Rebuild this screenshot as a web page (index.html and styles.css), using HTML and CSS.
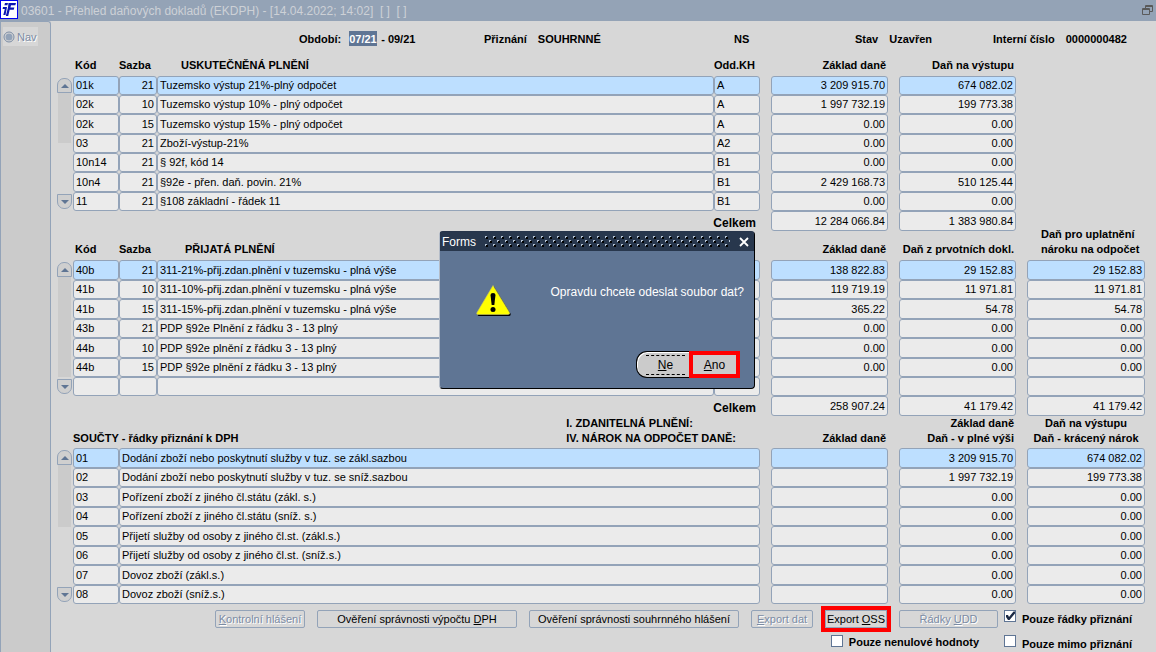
FILE: index.html
```html
<!DOCTYPE html>
<html lang="cs">
<head>
  <meta charset="UTF-8">
  <title>Přehled daňových dokladů</title>
  <link rel="stylesheet" href="styles.css">
</head>
<body>

<header class="titlebar">
  <svg class="logo" width="18" height="19" viewBox="0 0 18 19">
    <rect x="0.5" y="0.5" width="17" height="18" fill="#fff" stroke="#0000f0"/>
    <path d="M3 7h4L5.500 15H3.300L4.800 9H2.600zM5 3h3l-.6 2.300h-3z" fill="#0a14b4"/>
    <path d="M8.500 3h7.500l-.7 2.200h-4.300l-.6 2.200h4l-.7 2.300h-4L8.200 16H5.800L8 7.500z" fill="#0a14b4"/>
  </svg>
  <h1>03601 - Přehled daňových dokladů (EKDPH) - [14.04.2022; 14:02] &nbsp;[ ] &nbsp;[ ]</h1>
  <button class="restore" aria-label="Obnovit okno">
    <svg width="11" height="11" viewBox="0 0 11 11" fill="none" stroke="#5a5a5a">
      <path d="M3.5 3V.5h7v6H8M3 1.5h8"/>
      <path d="M.5 3.5h7v6h-7zM0 4.5h8"/>
    </svg>
  </button>
</header>

<div class="window">
  <aside class="sidebar">
    <button class="nav-button" disabled>
      <svg width="12" height="12" viewBox="0 0 12 12">
        <circle cx="6" cy="6" r="5" fill="#d7d7d7" stroke="#7b8ca4"/>
        <circle cx="6" cy="6" r="3.5" fill="#93a3b8"/>
      </svg>
      Nav
    </button>
  </aside>

  <main>
    <div class="info">
      <div><label for="period">Období:</label><input id="period" class="period" value="07/21"> <span>- 09/21</span></div>
      <div><span>Přiznání</span><span>SOUHRNNÉ</span></div>
      <div>NS</div>
      <div><span>Stav</span><span>Uzavřen</span></div>
      <div><span>Interní číslo</span><span>0000000482</span></div>
    </div>

    <table class="grid grid-output">
      <colgroup>
        <col class="c-scroll"><col class="c-code"><col class="c-rate"><col><col class="c-kh"><col class="c-gap"><col class="c-sum"><col class="c-gap"><col class="c-sum"><col class="c-gap"><col class="c-last">
      </colgroup>
      <thead>
        <tr><th></th><th>Kód</th><th class="rate">Sazba</th><th class="title">USKUTEČNĚNÁ PLNĚNÍ</th><th class="rate">Odd.KH</th><th></th><th class="num">Základ daně</th><th></th><th class="num">Daň na výstupu</th><th></th><th></th></tr>
      </thead>
      <tbody>
        <tr class="current"><td class="scroll" rowspan="6"><button class="arrow up" aria-label="Nahoru"></button><div class="thumb"></div></td><td>01k</td><td class="num">21</td><td>Tuzemsko výstup 21%-plný odpočet</td><td>A</td><td class="gap"></td><td class="num">3 209 915.70</td><td class="gap"></td><td class="num">674 082.02</td></tr>
        <tr><td>02k</td><td class="num">10</td><td>Tuzemsko výstup 10% - plný odpočet</td><td>A</td><td class="gap"></td><td class="num">1 997 732.19</td><td class="gap"></td><td class="num">199 773.38</td></tr>
        <tr><td>02k</td><td class="num">15</td><td>Tuzemsko výstup 15% - plný odpočet</td><td>A</td><td class="gap"></td><td class="num">0.00</td><td class="gap"></td><td class="num">0.00</td></tr>
        <tr><td>03</td><td class="num">21</td><td>Zboží-výstup-21%</td><td>A2</td><td class="gap"></td><td class="num">0.00</td><td class="gap"></td><td class="num">0.00</td></tr>
        <tr><td>10n14</td><td class="num">21</td><td>§ 92f, kód 14</td><td>B1</td><td class="gap"></td><td class="num">0.00</td><td class="gap"></td><td class="num">0.00</td></tr>
        <tr><td>10n4</td><td class="num">21</td><td>§92e - přen. daň. povin. 21%</td><td>B1</td><td class="gap"></td><td class="num">2 429 168.73</td><td class="gap"></td><td class="num">510 125.44</td></tr>
        <tr><td class="scroll"><button class="arrow down" aria-label="Dolů"></button></td><td>11</td><td class="num">21</td><td>§108 základní - řádek 11</td><td>B1</td><td class="gap"></td><td class="num">0.00</td><td class="gap"></td><td class="num">0.00</td></tr>
      </tbody>
      <tfoot>
        <tr><th class="total" colspan="5">Celkem</th><td class="gap"></td><td class="num">12 284 066.84</td><td class="gap"></td><td class="num">1 383 980.84</td></tr>
      </tfoot>
    </table>

    <table class="grid grid-input">
      <colgroup>
        <col class="c-scroll"><col class="c-code"><col class="c-rate"><col><col class="c-kh"><col class="c-gap"><col class="c-sum"><col class="c-gap"><col class="c-sum"><col class="c-gap"><col class="c-last">
      </colgroup>
      <thead>
        <tr><th></th><th>Kód</th><th class="rate">Sazba</th><th class="title">PŘIJATÁ PLNĚNÍ</th><th></th><th></th><th class="num">Základ daně</th><th></th><th class="num">Daň z prvotních dokl.</th><th></th><th class="claim">Daň pro uplatnění<br>nároku na odpočet</th></tr>
      </thead>
      <tbody>
        <tr class="current"><td class="scroll" rowspan="6"><button class="arrow up" aria-label="Nahoru"></button><div class="thumb"></div></td><td>40b</td><td class="num">21</td><td>311-21%-přij.zdan.plnění v tuzemsku - plná výše</td><td></td><td class="gap"></td><td class="num">138 822.83</td><td class="gap"></td><td class="num">29 152.83</td><td class="gap"></td><td class="num">29 152.83</td></tr>
        <tr><td>41b</td><td class="num">10</td><td>311-10%-přij.zdan.plnění v tuzemsku - plná výše</td><td></td><td class="gap"></td><td class="num">119 719.19</td><td class="gap"></td><td class="num">11 971.81</td><td class="gap"></td><td class="num">11 971.81</td></tr>
        <tr><td>41b</td><td class="num">15</td><td>311-15%-přij.zdan.plnění v tuzemsku - plná výše</td><td></td><td class="gap"></td><td class="num">365.22</td><td class="gap"></td><td class="num">54.78</td><td class="gap"></td><td class="num">54.78</td></tr>
        <tr><td>43b</td><td class="num">21</td><td>PDP §92e Plnění z řádku 3 - 13 plný</td><td></td><td class="gap"></td><td class="num">0.00</td><td class="gap"></td><td class="num">0.00</td><td class="gap"></td><td class="num">0.00</td></tr>
        <tr><td>44b</td><td class="num">10</td><td>PDP §92e plnění z řádku 3 - 13 plný</td><td></td><td class="gap"></td><td class="num">0.00</td><td class="gap"></td><td class="num">0.00</td><td class="gap"></td><td class="num">0.00</td></tr>
        <tr><td>44b</td><td class="num">15</td><td>PDP §92e plnění z řádku 3 - 13 plný</td><td></td><td class="gap"></td><td class="num">0.00</td><td class="gap"></td><td class="num">0.00</td><td class="gap"></td><td class="num">0.00</td></tr>
        <tr><td class="scroll"><button class="arrow down" aria-label="Dolů"></button></td><td></td><td></td><td></td><td></td><td class="gap"></td><td></td><td class="gap"></td><td></td><td class="gap"></td><td></td></tr>
      </tbody>
      <tfoot>
        <tr><th class="total" colspan="5">Celkem</th><td class="gap"></td><td class="num">258 907.24</td><td class="gap"></td><td class="num">41 179.42</td><td class="gap"></td><td class="num">41 179.42</td></tr>
      </tfoot>
    </table>

    <table class="grid grid-return">
      <colgroup>
        <col class="c-scroll"><col class="c-code"><col><col class="c-gap"><col class="c-sum"><col class="c-gap"><col class="c-sum"><col class="c-gap"><col class="c-last">
      </colgroup>
      <thead>
        <tr><th></th><th class="wide" colspan="2"><div class="sections"><span>SOUČTY - řádky přiznání k DPH</span><span>I. ZDANITELNÁ PLNĚNÍ:<br>IV. NÁROK NA ODPOČET DANĚ:</span></div></th><th></th><th class="num">Základ daně</th><th></th><th class="num">Základ daně<br>Daň - v plné výši</th><th></th><th class="center">Daň na výstupu<br>Daň - krácený nárok</th></tr>
      </thead>
      <tbody>
        <tr class="current"><td class="scroll" rowspan="7"><button class="arrow up" aria-label="Nahoru"></button><div class="thumb"></div></td><td>01</td><td>Dodání zboží nebo poskytnutí služby v tuz. se zákl.sazbou</td><td class="gap"></td><td></td><td class="gap"></td><td class="num">3 209 915.70</td><td class="gap"></td><td class="num">674 082.02</td></tr>
        <tr><td>02</td><td>Dodání zboží nebo poskytnutí služby v tuz. se sníž.sazbou</td><td class="gap"></td><td></td><td class="gap"></td><td class="num">1 997 732.19</td><td class="gap"></td><td class="num">199 773.38</td></tr>
        <tr><td>03</td><td>Pořízení zboží z jiného čl.státu (zákl. s.)</td><td class="gap"></td><td></td><td class="gap"></td><td class="num">0.00</td><td class="gap"></td><td class="num">0.00</td></tr>
        <tr><td>04</td><td>Pořízení zboží z jiného čl.státu (sníž. s.)</td><td class="gap"></td><td></td><td class="gap"></td><td class="num">0.00</td><td class="gap"></td><td class="num">0.00</td></tr>
        <tr><td>05</td><td>Přijetí služby od osoby z jiného čl.st. (zákl.s.)</td><td class="gap"></td><td></td><td class="gap"></td><td class="num">0.00</td><td class="gap"></td><td class="num">0.00</td></tr>
        <tr><td>06</td><td>Přijetí služby od osoby z jiného čl.st. (sníž.s.)</td><td class="gap"></td><td></td><td class="gap"></td><td class="num">0.00</td><td class="gap"></td><td class="num">0.00</td></tr>
        <tr><td>07</td><td>Dovoz zboží (zákl.s.)</td><td class="gap"></td><td></td><td class="gap"></td><td class="num">0.00</td><td class="gap"></td><td class="num">0.00</td></tr>
        <tr><td class="scroll"><button class="arrow down" aria-label="Dolů"></button></td><td>08</td><td>Dovoz zboží (sníž.s.)</td><td class="gap"></td><td></td><td class="gap"></td><td class="num">0.00</td><td class="gap"></td><td class="num">0.00</td></tr>
      </tbody>
    </table>

    <div class="footer">
      <div class="actions">
        <div class="buttons">
          <button class="btn w90" disabled><u>K</u>ontrolní hlášení</button>
          <button class="btn w200">Ověření správnosti výpočtu <u>D</u>PH</button>
          <button class="btn w210">Ověření správnosti souhrnného hlášení</button>
          <button class="btn w62" disabled><u>E</u>xport dat</button>
          <button class="btn w62 marked">Export <u>O</u>SS</button>
          <button class="btn w100" disabled>Řádky <u>U</u>DD</button>
        </div>
        <label class="check nonzero"><input type="checkbox"><span>Pouze nenulové hodnoty</span></label>
      </div>
      <div class="checks">
        <label class="check"><input type="checkbox" checked><span>Pouze řádky přiznání</span></label>
        <label class="check"><input type="checkbox"><span>Pouze mimo přiznání</span></label>
      </div>
    </div>
  </main>
</div>

<dialog open class="dialog">
  <div class="dialog-title">
    <span>Forms</span>
    <svg class="grip" height="11">
      <defs>
        <pattern id="dots" width="8" height="8" patternUnits="userSpaceOnUse">
          <path d="M1 1h2v2h-2zM5 5h2v2h-2z" fill="#000"/>
          <path d="M0 0h2v1h-1v1h-1zM4 4h2v1h-1v1h-1z" fill="#b4c2d2"/>
        </pattern>
      </defs>
      <rect width="100%" height="11" fill="url(#dots)"/>
    </svg>
    <button class="close" aria-label="Zavřít">
      <svg width="10" height="10" viewBox="0 0 10 10"><path d="M1 1l8 8M9 1L1 9" stroke="#fff" stroke-width="1.8"/></svg>
    </button>
  </div>
  <div class="dialog-body">
    <svg width="36" height="32" viewBox="0 0 36 32">
      <path d="M18 1.5L34.5 28.5Q35 31 33 31H3Q1 31 2 28.5z" fill="#000"/>
      <path d="M17 .5L33.5 27.5Q34 29.5 32 29.5H2Q0 29.5 1 27.5z" fill="#ff0" stroke="#c8c860" stroke-width=".6"/>
      <path d="M14.500 10q0-2 2.500-2t2.500 2l-1.200 10h-2.600z"/>
      <circle cx="17" cy="24.5" r="2.5"/>
    </svg>
    <p>Opravdu chcete odeslat soubor dat?</p>
  </div>
  <div class="dialog-buttons">
    <button class="no"><span><u>N</u>e</span></button>
    <button class="yes"><u>A</u>no</button>
  </div>
</dialog>

</body>
</html>
```
FILE: styles.css
```css
* {
  box-sizing: border-box;
}

body {
  margin: 0;
  min-height: 100vh;
  display: flex;
  flex-direction: column;
  background: #d7d7d7;
  color: #000;
  font-family: "Liberation Sans", Arial, sans-serif;
  font-size: 11px;
}

button, input {
  font: inherit;
  color: inherit;
}

/* window title */
.titlebar {
  display: flex;
  align-items: center;
  height: 21px;
  padding-right: 3px;
  background: #94a3b6;
}

.titlebar h1 {
  flex: 1;
  margin: 0 0 0 3px;
  color: #cdd1d6;
  font-size: 12px;
  font-weight: normal;
}

.logo {
  align-self: flex-start;
}

.restore, .close {
  display: flex;
  padding: 0;
  border: 0;
  background: none;
}

.window {
  flex: 1;
  display: flex;
}

.sidebar {
  width: 51px;
  padding: 5px 2px;
  border: 1px solid #93a3b8;
  border-bottom: 0;
  border-top-right-radius: 3px;
  background: #cbcbcb;
}

.nav-button {
  display: flex;
  align-items: center;
  gap: 2px;
  height: 19px;
  padding: 0 1px 0 0;
  border: 0;
  background: #d7d7d7;
  color: #7c8ca4;
  text-shadow: 1px 1px #fff;
}

main {
  flex: 1;
  min-width: 0;
  padding: 10px 11px 0 6px;
}

/* header line */
.info {
  display: grid;
  grid-template-columns: 185px 250px 1fr 138px 152px;
  height: 16px;
  padding-left: 242px;
  line-height: 16px;
  font-weight: bold;
  white-space: nowrap;
}

.info div {
  display: flex;
  gap: 11px;
}

.info div:first-child {
  gap: 4px;
}

.period {
  width: 28px;
  height: 15px;
  margin-left: 4px;
  padding: 0;
  border: 0;
  background: #5f7594;
  color: #fff;
}

/* data blocks */
.grid {
  width: 100%;
  table-layout: fixed;
  border-collapse: separate;
  border-spacing: 0;
  white-space: nowrap;
}

.c-scroll { width: 16px; }
.c-code { width: 46px; }
.c-rate { width: 38px; }
.c-kh { width: 46px; }
.c-gap { width: 11px; }
.c-sum { width: 117px; }
.c-last { width: 118px; }

.grid th {
  padding: 0 2px 3px;
  text-align: left;
  vertical-align: bottom;
  line-height: 15px;
}

.grid th.rate {
  padding-left: 0;
}

.grid th.title {
  padding-left: 24px;
}

.grid-input th.title {
  padding-left: 28px;
}

.grid th.center {
  text-align: center;
}

.grid th.claim {
  padding: 0 0 3px 14px;
}

.grid th.wide {
  padding-left: 0;
}

.grid .num {
  text-align: right;
}

.grid th.total {
  padding: 5px 4px 0;
  text-align: right;
  vertical-align: top;
  font-size: 12px;
  line-height: 14px;
}

.grid-output thead tr {
  height: 29px;
}

/* the two-line heading reaches up beside the totals above */
.grid-input {
  margin-top: -4px;
}

.grid-return thead th {
  padding-bottom: 2px;
}

.grid td {
  height: 19px;
  padding: 0 2px;
  border: 1px solid #93a3b8;
  border-radius: 3px;
  background: #ebebeb;
  line-height: 17px;
}

.grid-output tbody tr:nth-child(3n) td,
.grid-input tbody tr:nth-child(-2n+5) td,
.grid-return tbody tr:nth-child(odd) td,
.grid tfoot td {
  height: 20px;
}

.grid .current td {
  background: #bddfff;
}

.grid td.gap,
.grid td.scroll {
  padding: 0;
  border: 0;
  background: none;
}

.grid td.scroll {
  vertical-align: top;
}

.grid-return {
  margin-bottom: 6px;
}

.sections {
  display: flex;
  justify-content: space-between;
  align-items: flex-end;
  padding-right: 22px;
}

/* scrollbars */
.arrow {
  display: flex;
  align-items: center;
  justify-content: center;
  width: 15px;
  height: 15px;
  padding: 0;
  border: 1px solid #93a3b8;
  background: #cfcfcf;
}

.arrow::before {
  content: "";
  border: 4px solid transparent;
}

.arrow.up {
  margin-top: 2px;
  border-radius: 7px 7px 0 0;
}

.arrow.up::before {
  border-top: 0;
  border-bottom-color: #5f7594;
}

.arrow.down {
  margin-top: 2px;
  border-radius: 0 0 7px 7px;
}

.arrow.down::before {
  border-bottom: 0;
  border-top-color: #5f7594;
}

.thumb {
  width: 13px;
  height: 50px;
  margin-left: 1px;
  background: #cbcbcb;
}

.grid-input .thumb {
  height: 100px;
}

.grid-return .thumb {
  height: 62px;
}

/* bottom controls */
.footer {
  display: flex;
  justify-content: flex-end;
  gap: 6px;
}

.actions {
  display: flex;
  flex-direction: column;
  gap: 7px;
}

.buttons {
  display: flex;
  gap: 12px;
}

.btn {
  height: 18px;
  padding: 0;
  border: 1px solid #93a3b8;
  border-radius: 2px;
  background: none;
  white-space: nowrap;
}

.btn:disabled {
  color: #7c8ca4;
  text-shadow: 1px 1px #fff;
}

.w62 { width: 62px; }
.w90 { width: 90px; }
.w100 { width: 99px; }
.w200 { width: 200px; }
.w210 { width: 210px; }

.marked {
  border-radius: 0;
  outline: 4px solid #f00;
}

.check {
  display: flex;
  gap: 6px;
  line-height: 14px;
  font-weight: bold;
  white-space: nowrap;
}

.check input {
  display: grid;
  appearance: none;
  width: 12px;
  height: 12px;
  margin: 0;
  border: 1px solid #5f7594;
  background: #fff;
}

.check input:checked::before {
  content: "";
  width: 10px;
  height: 10px;
  background: #1c2a44;
  clip-path: polygon(10% 40%, 30% 40%, 40% 60%, 85% 5%, 100% 5%, 100% 25%, 45% 90%, 30% 90%, 10% 60%);
}

.nonzero {
  align-self: flex-end;
  margin-right: 19px;
}

.checks {
  display: flex;
  flex-direction: column;
  gap: 9px;
  width: 141px;
}

.checks span {
  padding-top: 2px;
}

/* confirmation dialog */
.dialog {
  position: absolute;
  left: 439px;
  top: 231px;
  width: 316px;
  height: 158px;
  margin: 0;
  padding: 0;
  border: 1px solid #000;
  border-top-color: #26344a;
  border-left-color: #b4bcc8;
  border-radius: 4px;
  background: #5f7594;
  color: #fff;
}

.dialog-title {
  display: flex;
  align-items: center;
  gap: 9px;
  height: 19px;
  padding: 0 5px 0 2px;
  background: #28374d;
  font-size: 12px;
}

.grip {
  flex: 1;
  min-width: 0;
}

.dialog-body {
  display: flex;
  justify-content: space-between;
  padding: 33px 10px 0 36px;
  font-size: 12px;
}

.dialog-body svg {
  margin-top: 1px;
}

.dialog-body p {
  margin: 0;
  line-height: 16px;
}

.dialog-buttons {
  display: flex;
  justify-content: flex-end;
  padding: 34px 14px 0 0;
  color: #000;
  font-size: 12px;
}

.dialog-buttons button {
  height: 27px;
  padding: 0;
  background: #cbcbcb;
}

.no {
  width: 53px;
  border: 1px solid #000;
  border-right: 0;
  border-radius: 11px 0 0 11px;
  box-shadow: inset 1px 1px #fff;
}

.no span {
  display: block;
  margin: 0 4px 0 9px;
  border: dashed #000;
  border-width: 1px 0;
  line-height: 18px;
}

.yes {
  width: 51px;
  border: 4px solid #f00;
}
```
